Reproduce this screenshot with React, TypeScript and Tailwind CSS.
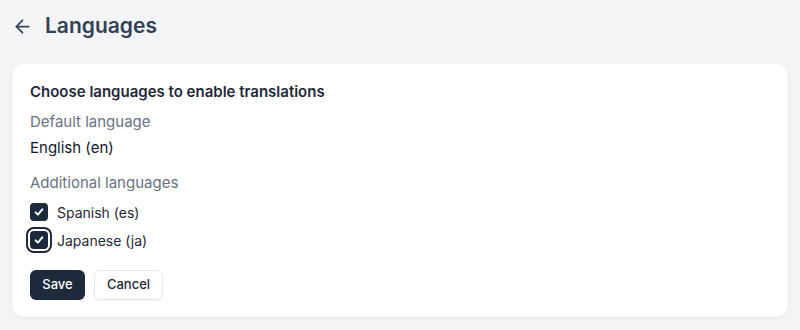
import React from "react";

function Check() {
  return (
    <svg viewBox="0 0 16 16" className="h-[12px] w-[12px]" fill="none" stroke="white" strokeWidth="2.6" strokeLinecap="round" strokeLinejoin="round">
      <path d="M3.5 8.5l3 3 6-7" />
    </svg>
  );
}

export default function App() {
  return (
    <div className="min-h-[330px] w-full bg-[#f3f4f6] font-['Inter',sans-serif]">
      <div className="flex h-12 items-center px-[12px] pt-1">
        <svg viewBox="0 0 24 24" className="h-[21px] w-[21px] text-slate-700" fill="none" stroke="currentColor" strokeWidth="2" strokeLinecap="round" strokeLinejoin="round">
          <path d="M19 12H5" />
          <path d="M12 19l-7-7 7-7" />
        </svg>
        <h1 className="ml-[12px] text-[21px] font-semibold text-[#334155]">Languages</h1>
      </div>
      <div className="mx-3 mt-4 rounded-xl bg-white px-[18px] pt-[18px] pb-[17px] shadow-[0_1px_3px_rgba(0,0,0,0.08)]">
        <div className="text-[15px] leading-5 font-semibold text-[#1f2937]">Choose languages to enable translations</div>
        <div className="mt-2 text-[15px] leading-6 text-gray-500">Default language</div>
        <div className="mt-0.5 text-[15px] leading-6 text-gray-900">English (en)</div>
        <div className="mt-[11px] text-[15px] leading-6 text-gray-500">Additional languages</div>
        <label className="mt-[5px] flex h-6 items-center gap-[9px]">
          <span className="flex h-[18px] w-[18px] items-center justify-center rounded-[4px] bg-[#1e293b]">
            <Check />
          </span>
          <span className="text-[14px] text-[#1f2937]">Spanish (es)</span>
        </label>
        <label className="mt-1 flex h-6 items-center gap-[9px]">
          <span className="flex h-[18px] w-[18px] items-center justify-center rounded-[4px] bg-[#1e293b] ring-2 ring-[#1e293b] ring-offset-2">
            <Check />
          </span>
          <span className="text-[14px] text-[#1f2937]">Japanese (ja)</span>
        </label>
        <div className="mt-[18px] flex gap-[9px]">
          <button className="h-[30px] w-[55px] rounded-md bg-[#1e293b] text-[13px] font-medium text-white">Save</button>
          <button className="h-[30px] w-[69px] rounded-md border border-gray-200 bg-white text-[13px] font-medium text-[#1f2937] shadow-[0_1px_2px_rgba(0,0,0,0.06)]">Cancel</button>
        </div>
      </div>
    </div>
  );
}
